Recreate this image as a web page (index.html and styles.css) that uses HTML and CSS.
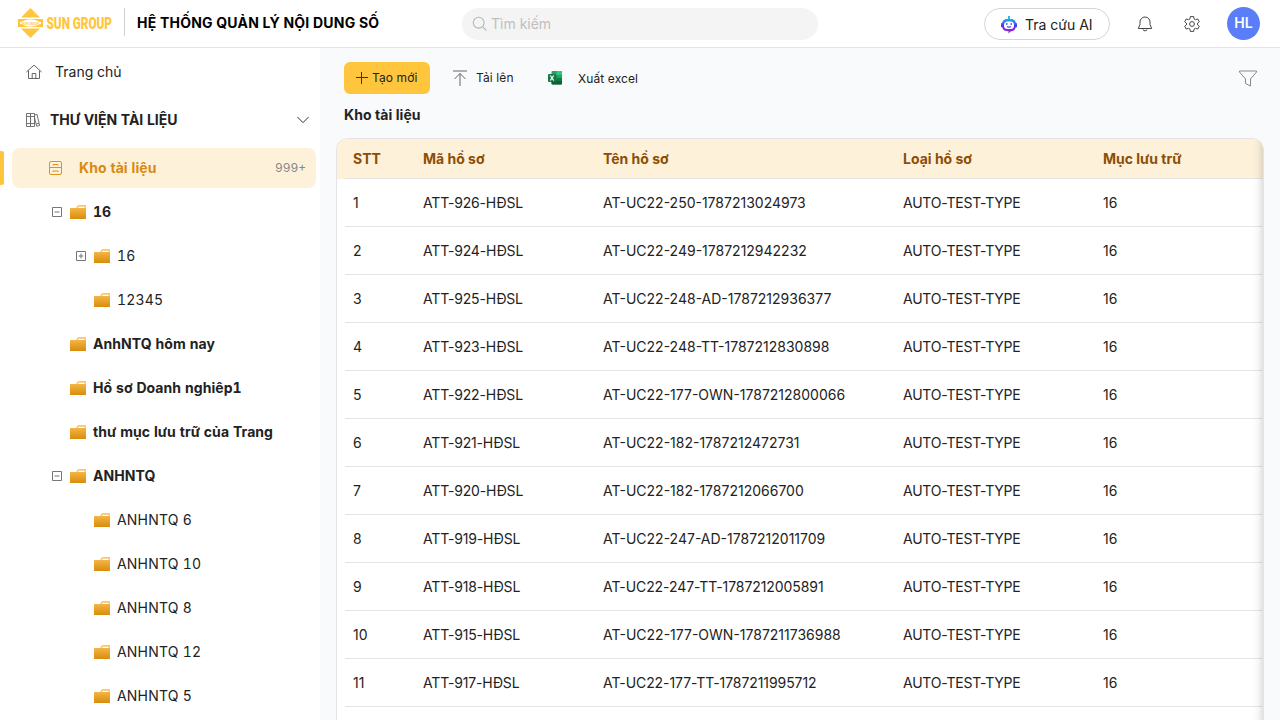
FILE: index.html
```html
<!DOCTYPE html>
<html lang="vi">
<head>
<meta charset="utf-8">
<title>Hệ thống quản lý nội dung số</title>
<link rel="stylesheet" href="styles.css">
</head>
<body>
<svg class="defs" width="0" height="0" aria-hidden="true">
  <defs>
    <linearGradient id="gold" x1="0" y1="0" x2="0" y2="1"><stop offset="0" stop-color="#f5b546"/><stop offset="1" stop-color="#d88c0c"/></linearGradient>
    <linearGradient id="bot" x1="0" y1="0" x2="0" y2="1"><stop offset="0" stop-color="#12b5f5"/><stop offset=".45" stop-color="#4a3af0"/><stop offset="1" stop-color="#b01fd0"/></linearGradient>
    <symbol id="folder" viewBox="0 0 16 14"><path d="M6 3 7.500 .8Q8 0 9 0H15Q16 0 16 1V5H6Z" fill="#fac56c"/><path d="M8 3 8.600 1.700H14.500V3Z" fill="#fff"/><path d="M0 3H16V14H0Z" fill="url(#gold)"/></symbol>
    <symbol id="minus" viewBox="0 0 12 12"><path d="M1.500 1.500H10.500V10.500H1.500ZM3.500 6H8.500" fill="none" stroke="#777"/></symbol>
    <symbol id="plus" viewBox="0 0 12 12"><path d="M1.500 1.500H10.500V10.500H1.500ZM3.500 6H8.500M6 3.500V8.500" fill="none" stroke="#777"/></symbol>
  </defs>
</svg>
<header class="topbar">
  <div class="brand">
    <svg width="96" height="32" viewBox="0 0 96 32">
      <g fill="#ffc53d"><path d="M12.500 0 22 9.500H3ZM3 20.500H22L12.500 30Z"/><path d="M0 11H25V14H22Q12 8.500 3 14H0ZM0 19V16H3Q12 21.500 22 16H25V19Z"/><path d="M0 11H2V19H0ZM23 14H25V19H23Z"/></g>
      <text x="4" y="16.500" class="mini-logo" textLength="17" lengthAdjust="spacingAndGlyphs">SUN GROUP</text>
      <text x="28.500" y="20.800" class="logo-text" textLength="65.500" lengthAdjust="spacingAndGlyphs">SUN GROUP</text>
    </svg>
  </div>
  <h1 class="system-name">HỆ THỐNG QUẢN LÝ NỘI DUNG SỐ</h1>
  <div class="search">
    <svg width="16" height="16" viewBox="0 0 16 16" fill="none" stroke="#b5b5b5" stroke-width="1.100"><circle cx="6.700" cy="6.700" r="5.400"/><path d="m10.600 10.600 3.900 4"/></svg>
    <span>Tìm kiếm</span>
  </div>
  <div class="tools">
    <div class="ai-button">
      <svg width="16" height="18" viewBox="0 0 16 18"><path d="M7 0H9V4H7Z" fill="#2bbaf8"/><path d="M4.500 3H11.500Q14.500 4 14.700 6.500L16 7.500V11L14.600 11.500Q14 15 10 15.300L7.500 17.500V15.300Q2 15.500 1.400 11.500L0 11V7.500L1.300 6.500Q1.500 4 4.500 3Z" fill="url(#bot)"/><rect x="3" y="5.500" width="10" height="7.500" rx="3.500" fill="#fff"/><path d="M5 8H6.500M9.500 8H11M6 10.500Q8 11.700 10 10.500" fill="none" stroke="#5036e0" stroke-width="1.300"/></svg>
      <span>Tra cứu AI</span>
    </div>
    <svg class="bell" width="16" height="16" viewBox="0 0 16 16" fill="none" stroke="#454545" stroke-linejoin="round" stroke-linecap="round"><path d="M3 7V6A5 5 0 0 1 13 6V8.500L14.700 12.500H1.300L3 8.500ZM6 14Q8 16.200 10 14"/></svg>
    <svg class="gear" width="16" height="16" viewBox="0 0 16 16" fill="none" stroke="#454545" stroke-linejoin="round"><path d="M6.300 .6H9.700L10 2.800 11.600 3.700 13.700 2.900 15.300 5.700 13.600 7.100V8.900L15.300 10.300 13.700 13.100 11.600 12.300 10 13.200 9.700 15.400H6.300L6 13.200 4.400 12.300 2.300 13.100 .7 10.300 2.400 8.900V7.100L.7 5.700 2.300 2.900 4.400 3.700 6 2.800Z"/><circle cx="8" cy="8" r="2.400"/></svg>
    <div class="avatar">HL</div>
  </div>
</header>
<div class="body">
  <nav class="sidebar">
    <div class="nav-home">
      <svg width="16" height="16" viewBox="0 0 16 16" fill="none" stroke="#666"><path d="M.4 8 8 1.200 15.600 8M2.500 6.500V14.500H13.500V6.500M6.200 14V9.500H9.800V14"/></svg>
      <span>Trang chủ</span>
    </div>
    <div class="nav-library">
      <svg width="16" height="16" viewBox="0 0 16 16" fill="none" stroke="#666" stroke-width=".9"><path d="M1.500 1.500H5.500V14.500H1.500ZM5.500 1.500H9.500V14.500H5.500ZM1.500 4.500H9.500M1.500 11.500H9.500M9.500 3 12 2.300 14.600 13.500 11.600 14.200 9.500 5.500M11.200 12 14 11.300"/></svg>
      <span>THƯ VIỆN TÀI LIỆU</span>
      <svg class="chevron" width="12" height="8" viewBox="0 0 12 8" fill="none" stroke="#333"><path d="M.5 1 6 6.700 11.500 1"/></svg>
    </div>
    <div class="nav-active">
      <svg width="14" height="16" viewBox="0 0 14 16" fill="none" stroke="#dc9420"><rect x="1.500" y="1.500" width="12" height="13" rx="1.500"/><path d="M1.500 7.500H13.500M5 5.500V4.500H10V5.500M5 12V11H10V12"/></svg>
      <span class="label">Kho tài liệu</span><span class="count">999+</span>
    </div>
    <div class="tree">
      <div class="node root"><svg class="toggle"><use href="#minus"/></svg><svg class="folder"><use href="#folder"/></svg><span>16</span></div>
      <div class="node child"><svg class="toggle"><use href="#plus"/></svg><svg class="folder"><use href="#folder"/></svg><span>16</span></div>
      <div class="node child"><i class="toggle"></i><svg class="folder"><use href="#folder"/></svg><span>12345</span></div>
      <div class="node root"><i class="toggle"></i><svg class="folder"><use href="#folder"/></svg><span>AnhNTQ hôm nay</span></div>
      <div class="node root"><i class="toggle"></i><svg class="folder"><use href="#folder"/></svg><span>Hồ sơ Doanh nghiêp1</span></div>
      <div class="node root"><i class="toggle"></i><svg class="folder"><use href="#folder"/></svg><span>thư mục lưu trữ của Trang</span></div>
      <div class="node root"><svg class="toggle"><use href="#minus"/></svg><svg class="folder"><use href="#folder"/></svg><span>ANHNTQ</span></div>
      <div class="node child"><i class="toggle"></i><svg class="folder"><use href="#folder"/></svg><span>ANHNTQ 6</span></div>
      <div class="node child"><i class="toggle"></i><svg class="folder"><use href="#folder"/></svg><span>ANHNTQ 10</span></div>
      <div class="node child"><i class="toggle"></i><svg class="folder"><use href="#folder"/></svg><span>ANHNTQ 8</span></div>
      <div class="node child"><i class="toggle"></i><svg class="folder"><use href="#folder"/></svg><span>ANHNTQ 12</span></div>
      <div class="node child"><i class="toggle"></i><svg class="folder"><use href="#folder"/></svg><span>ANHNTQ 5</span></div>
    </div>
  </nav>
  <main class="content">
    <div class="actions">
      <div class="create"><svg width="12" height="12" viewBox="0 0 12 12" stroke="#333"><path d="M0 5.500H12M5.500 0V12"/></svg><span>Tạo mới</span></div>
      <div class="upload"><svg width="14" height="17" viewBox="0 0 14 17" fill="none" stroke="#666"><path d="M0 1H14M7 16V3.500M1.500 9 7 3.500 12.500 9"/></svg><span>Tải lên</span></div>
      <div class="excel"><svg width="14" height="14" viewBox="0 0 14 14"><rect x="3.500" width="10.500" height="13.500" rx="1" fill="#21a366"/><path d="M8.500 0H13Q14 0 14 1V4H8.500Z" fill="#33c481"/><path d="M3.500 4H8.500V9H3.500Z" fill="#107c41"/><path d="M3.500 9H14V12.500Q14 13.500 13 13.500H4.500Q3.500 13.500 3.500 12.500Z" fill="#185c37"/><path d="M8.500 7H14V10H8.500Z" fill="#107c41"/><rect y="3" width="8" height="8" rx="1" fill="#107c41"/><path d="m2.300 4.500 3.400 5M5.700 4.500 2.300 9.500" stroke="#fff" stroke-width="1.300"/></svg><span>Xuất excel</span></div>
      <svg class="filter" width="18" height="17" viewBox="0 0 18 17" fill="none" stroke="#888" stroke-linejoin="round"><path d="M.5 1V2L6.500 9V13.500L11.500 16V9L17.500 2V1Z"/></svg>
    </div>
    <h2 class="title">Kho tài liệu</h2>
    <section class="table">
      <div class="thead"><div class="tr"><span>STT</span><span>Mã hồ sơ</span><span>Tên hồ sơ</span><span>Loại hồ sơ</span><span>Mục lưu trữ</span></div></div>
      <div class="tr"><span>1</span><span class="code">ATT-926-HĐSL</span><span>AT-UC22-250-1787213024973</span><span class="type">AUTO-TEST-TYPE</span><span>16</span></div>
      <div class="tr"><span>2</span><span class="code">ATT-924-HĐSL</span><span>AT-UC22-249-1787212942232</span><span class="type">AUTO-TEST-TYPE</span><span>16</span></div>
      <div class="tr"><span>3</span><span class="code">ATT-925-HĐSL</span><span>AT-UC22-248-AD-1787212936377</span><span class="type">AUTO-TEST-TYPE</span><span>16</span></div>
      <div class="tr"><span>4</span><span class="code">ATT-923-HĐSL</span><span>AT-UC22-248-TT-1787212830898</span><span class="type">AUTO-TEST-TYPE</span><span>16</span></div>
      <div class="tr"><span>5</span><span class="code">ATT-922-HĐSL</span><span>AT-UC22-177-OWN-1787212800066</span><span class="type">AUTO-TEST-TYPE</span><span>16</span></div>
      <div class="tr"><span>6</span><span class="code">ATT-921-HĐSL</span><span>AT-UC22-182-1787212472731</span><span class="type">AUTO-TEST-TYPE</span><span>16</span></div>
      <div class="tr"><span>7</span><span class="code">ATT-920-HĐSL</span><span>AT-UC22-182-1787212066700</span><span class="type">AUTO-TEST-TYPE</span><span>16</span></div>
      <div class="tr"><span>8</span><span class="code">ATT-919-HĐSL</span><span>AT-UC22-247-AD-1787212011709</span><span class="type">AUTO-TEST-TYPE</span><span>16</span></div>
      <div class="tr"><span>9</span><span class="code">ATT-918-HĐSL</span><span class="tight">AT-UC22-247-TT-1787212005891</span><span class="type">AUTO-TEST-TYPE</span><span>16</span></div>
      <div class="tr"><span>10</span><span class="code">ATT-915-HĐSL</span><span>AT-UC22-177-OWN-1787211736988</span><span class="type">AUTO-TEST-TYPE</span><span>16</span></div>
      <div class="tr"><span>11</span><span class="code">ATT-917-HĐSL</span><span class="tight">AT-UC22-177-TT-1787211995712</span><span class="type">AUTO-TEST-TYPE</span><span>16</span></div>
    </section>
  </main>
</div>
</body>
</html>
```
FILE: styles.css
```css
* { box-sizing: border-box; }
body { margin: 0; height: 720px; overflow: hidden; display: flex; flex-direction: column; font: 14px/22px Inter, sans-serif; color: #222; background: #fff; }
svg { display: block; flex: none; overflow: visible; }
.defs { position: absolute; }
h1, h2 { margin: 0; }
.topbar { height: 48px; flex: none; display: flex; align-items: center; padding-top: 1px; border-bottom: 1px solid #e4e4e4; }
.brand { width: 125px; height: 28px; padding-left: 18px; margin-top: -4px; display: flex; align-items: center; border-right: 1px solid #d0d0d0; }
.brand svg { margin-top: 4px; }
.logo-text { font: 900 16px Roboto, sans-serif; fill: #ffc53d; }
.mini-logo { font: bold 4px "Liberation Sans", sans-serif; fill: #ffc53d; }
.system-name { width: 337px; padding-left: 12px; font-size: 14px; line-height: 22px; font-weight: 700; letter-spacing: .21px; color: #000; margin-top: -2px; white-space: nowrap; }
.search { width: 356px; height: 32px; border-radius: 16px; background: #f4f4f4; color: #bfbfbf; display: flex; align-items: center; gap: 3px; padding-left: 10px; }
.tools { flex: 1; display: flex; align-items: center; padding-left: 166px; }
.ai-button { width: 126px; height: 32px; border: 1px solid #d5d5d5; border-radius: 16px; display: flex; align-items: center; gap: 8px; padding-left: 16px; white-space: nowrap; padding-top: 2px; }
.bell { margin-left: 27px; }
.gear { margin-left: 31px; }
.avatar { margin-left: 27px; margin-top: -1px; padding-bottom: 1px; width: 33px; height: 33px; border-radius: 50%; background: #597ef7; color: #fff; font-weight: 600; display: grid; place-items: center; }
.body { flex: 1; display: flex; min-height: 0; }
.sidebar { width: 320px; flex: none; overflow: hidden; font-feature-settings: "tnum"; }
.nav-home { height: 48px; display: flex; align-items: center; gap: 13px; padding-left: 26px; }
.nav-library { height: 48px; display: flex; align-items: center; gap: 9px; padding: 0 11px 0 25px; font-weight: 700; letter-spacing: -.03px; }
.chevron { margin-left: auto; }
.nav-active { height: 40px; margin: 4px 4px 4px 12px; border-radius: 8px; background: #fdf1da; color: #d88a10; display: flex; align-items: center; padding: 0 10px 0 36px; position: relative; }
.nav-active::before { content: ""; position: absolute; left: -12px; top: 3px; width: 4px; height: 34px; background: #ffc53d; border-radius: 0 2px 2px 0; }
.nav-active .label { margin-left: 17px; font-weight: 700; letter-spacing: .07px; }
.count { margin-left: auto; font-size: 12px; color: #888; }
.node { height: 40px; margin-bottom: 4px; display: flex; align-items: center; letter-spacing: .2px; }
.root { padding-left: 51px; font-weight: 700; letter-spacing: .07px; }
.child { padding-left: 75px; }
.toggle { width: 12px; height: 12px; margin-right: 7px; }
.folder { width: 16px; height: 14px; margin-right: 7px; }
.content { flex: 1; min-width: 0; background: #f9fafc; padding: 14px 16px 0; display: flex; flex-direction: column; }
.actions { height: 32px; flex: none; padding: 0 7px 0 8px; display: flex; align-items: center; font-size: 12px; letter-spacing: .1px; }
.create { width: 86px; height: 32px; padding-left: 12px; border-radius: 6px; background: #ffc53d; display: flex; align-items: center; gap: 4px; }
.upload { display: flex; align-items: center; gap: 9px; width: 95px; margin-left: 23px; }
.excel { display: flex; align-items: center; gap: 16px; padding-top: 2px; }
.excel svg { margin-top: -2px; }
.filter { margin-left: auto; }
.title { margin: 10px 0 12px 8px; font-size: 14px; line-height: 22px; font-weight: 700; letter-spacing: .07px; }
.table { flex: 1; border: 1px solid #e4e4e4; border-bottom: 0; border-radius: 12px 12px 0 0; background: #fff; overflow: hidden; position: relative; }
.table::after { content: ""; position: absolute; right: 0; top: 0; bottom: 0; width: 10px; background: linear-gradient(to right, transparent, rgba(5,5,5,.03) 50%, rgba(5,5,5,.12)); }
.thead { background: #fdf1da; color: #8c4d05; font-weight: 700; }
.tr { height: 48px; margin: 0 1px 0 8px; padding: 1px 0 0 8px; border-bottom: 1px solid #e4e4e4; display: grid; grid-template-columns: 70px 180px 300px 200px 1fr; align-items: center; white-space: nowrap; }
.thead .tr { height: 40px; }
.code { letter-spacing: -.18px; }
.type { letter-spacing: -.22px; }
.tight { letter-spacing: -.08px; }
```
